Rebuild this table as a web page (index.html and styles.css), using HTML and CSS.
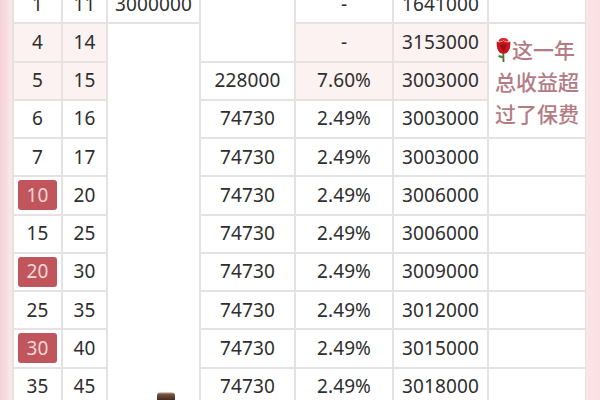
FILE: index.html
```html
<!DOCTYPE html>
<html lang="zh">
<head>
<meta charset="utf-8">
<link rel="stylesheet" href="styles.css">
</head>
<body>
<div class="page">
  <div class="sheet">
    <!-- row: 1 -->
    <div class="c r1 k1">1</div>
    <div class="c r1 k2">11</div>
    <div class="c r1 k3">3000000</div>
    <div class="c blank r1to2 k4"></div>
    <div class="c r1 k5">-</div>
    <div class="c r1 k6">1641000</div>
    <div class="c r1 k7"></div>

    <!-- row: 4 -->
    <div class="c tint r2 k1">4</div>
    <div class="c tint r2 k2">14</div>
    <div class="c blank r2toEnd k3">
      <span class="cap"></span>
    </div>
    <div class="c tint r2 k5">-</div>
    <div class="c tint r2 k6">3153000</div>
    <div class="c note r2to4 k7">
      <p class="note-text"><svg class="rose" viewBox="0 0 16 24" width="17" height="25"><path d="M7.8 13 L8 24" stroke="#3f7a2c" stroke-width="1.8"/><path d="M8 19 Q4 16.5 2.5 18.5 Q5.5 21 8 20" fill="#4d8a33"/><path d="M1.5 4 Q1 12.5 4.5 15 Q8 17 11.5 15 Q15 12.5 14.5 4 Q11.5 6.5 8 3.5 Q4.5 6.5 1.5 4Z" fill="#c4161c"/><path d="M3 4 Q4.5 0.5 8 1 Q11.5 0.5 13 4 Q10.5 5.5 8 3 Q5.5 5.5 3 4Z" fill="#e02a2a"/><path d="M5 8 Q8 5.5 11 8 Q9.5 11.5 8 14 Q6.5 11.5 5 8Z" fill="#9c0f14"/></svg>这一年<br>总收益超<br>过了保费</p>
    </div>

    <!-- row: 5 -->
    <div class="c tint r3 k1">5</div>
    <div class="c tint r3 k2">15</div>
    <div class="c r3 k4">228000</div>
    <div class="c tint r3 k5">7.60%</div>
    <div class="c tint r3 k6">3003000</div>

    <!-- row: 6 -->
    <div class="c r4 k1">6</div>
    <div class="c r4 k2">16</div>
    <div class="c r4 k4">74730</div>
    <div class="c r4 k5">2.49%</div>
    <div class="c r4 k6">3003000</div>

    <!-- row: 7 -->
    <div class="c r5 k1">7</div>
    <div class="c r5 k2">17</div>
    <div class="c r5 k4">74730</div>
    <div class="c r5 k5">2.49%</div>
    <div class="c r5 k6">3003000</div>
    <div class="c r5 k7"></div>

    <!-- row: 10 -->
    <div class="c r6 k1"><span class="badge">10</span></div>
    <div class="c r6 k2">20</div>
    <div class="c r6 k4">74730</div>
    <div class="c r6 k5">2.49%</div>
    <div class="c r6 k6">3006000</div>
    <div class="c r6 k7"></div>

    <!-- row: 15 -->
    <div class="c r7 k1">15</div>
    <div class="c r7 k2">25</div>
    <div class="c r7 k4">74730</div>
    <div class="c r7 k5">2.49%</div>
    <div class="c r7 k6">3006000</div>
    <div class="c r7 k7"></div>

    <!-- row: 20 -->
    <div class="c r8 k1"><span class="badge">20</span></div>
    <div class="c r8 k2">30</div>
    <div class="c r8 k4">74730</div>
    <div class="c r8 k5">2.49%</div>
    <div class="c r8 k6">3009000</div>
    <div class="c r8 k7"></div>

    <!-- row: 25 -->
    <div class="c r9 k1">25</div>
    <div class="c r9 k2">35</div>
    <div class="c r9 k4">74730</div>
    <div class="c r9 k5">2.49%</div>
    <div class="c r9 k6">3012000</div>
    <div class="c r9 k7"></div>

    <!-- row: 30 -->
    <div class="c r10 k1"><span class="badge">30</span></div>
    <div class="c r10 k2">40</div>
    <div class="c r10 k4">74730</div>
    <div class="c r10 k5">2.49%</div>
    <div class="c r10 k6">3015000</div>
    <div class="c r10 k7"></div>

    <!-- row: 35 -->
    <div class="c r11 k1">35</div>
    <div class="c r11 k2">45</div>
    <div class="c r11 k4">74730</div>
    <div class="c r11 k5">2.49%</div>
    <div class="c r11 k6">3018000</div>
    <div class="c r11 k7"></div>
  </div>
</div>
</body>
</html>
```

FILE: styles.css
```css
html, body {
  margin: 0;
  padding: 0;
  width: 600px;
  height: 400px;
  overflow: hidden;
}

body {
  background: linear-gradient(90deg, #f5d0d4 0px, #fbe6e8 10px, #fbe6e8 586px, #fadfe2 600px);
  font-family: "Noto Sans", "Noto Sans CJK SC", sans-serif;
  color: #2e2e2e;
}

.page {
  padding-left: 12px;
  margin-top: -16px;
}

.sheet {
  display: grid;
  width: 574px;
  box-sizing: border-box;
  padding: 2px 1px 0 2px;
  gap: 2px;
  background: #e6e2e2;
  grid-template-columns: 47px 43px 91px 93px 96px 93px 96px;
  grid-template-rows: repeat(11, 36.25px);
}

.c {
  background: #ffffff;
  display: flex;
  align-items: center;
  justify-content: center;
  font-size: 19px;
  line-height: 1;
  letter-spacing: 0.1px;
}

.tint { background: #fcf2f2; }

.k1 { grid-column: 1; }
.k2 { grid-column: 2; }
.k3 { grid-column: 3; }
.k4 { grid-column: 4; }
.k5 { grid-column: 5; }
.k6 { grid-column: 6; }
.k7 { grid-column: 7; }

.r1 { grid-row: 1; }
.r2 { grid-row: 2; }
.r3 { grid-row: 3; }
.r4 { grid-row: 4; }
.r5 { grid-row: 5; }
.r6 { grid-row: 6; }
.r7 { grid-row: 7; }
.r8 { grid-row: 8; }
.r9 { grid-row: 9; }
.r10 { grid-row: 10; }
.r11 { grid-row: 11; }

.r1to2 { grid-row: 1 / span 2; }
.r2to4 { grid-row: 2 / span 3; }
.r2toEnd { grid-row: 2 / span 10; }

.blank {
  position: relative;
}

.cap {
  position: absolute;
  left: 49px;
  bottom: 4px;
  width: 18px;
  height: 9px;
  border-radius: 4px 4px 2px 2px;
  background: linear-gradient(180deg, #f4ebe4 0px, #7a5542 2px, #3a2418 9px);
}

.badge {
  display: flex;
  align-items: center;
  justify-content: center;
  width: 39px;
  height: 30px;
  border-radius: 3px;
  background: #c0555c;
  color: #f7d6d8;
  font-size: 19px;
}

.note {
  justify-content: flex-start;
  padding-left: 6px;
}

.note-text {
  margin: 0;
  font-family: "Noto Sans CJK SC", sans-serif;
  font-size: 21px;
  font-weight: 500;
  line-height: 32px;
  color: #b47b85;
  letter-spacing: 0;
}

.rose {
  vertical-align: -4px;
}
```
